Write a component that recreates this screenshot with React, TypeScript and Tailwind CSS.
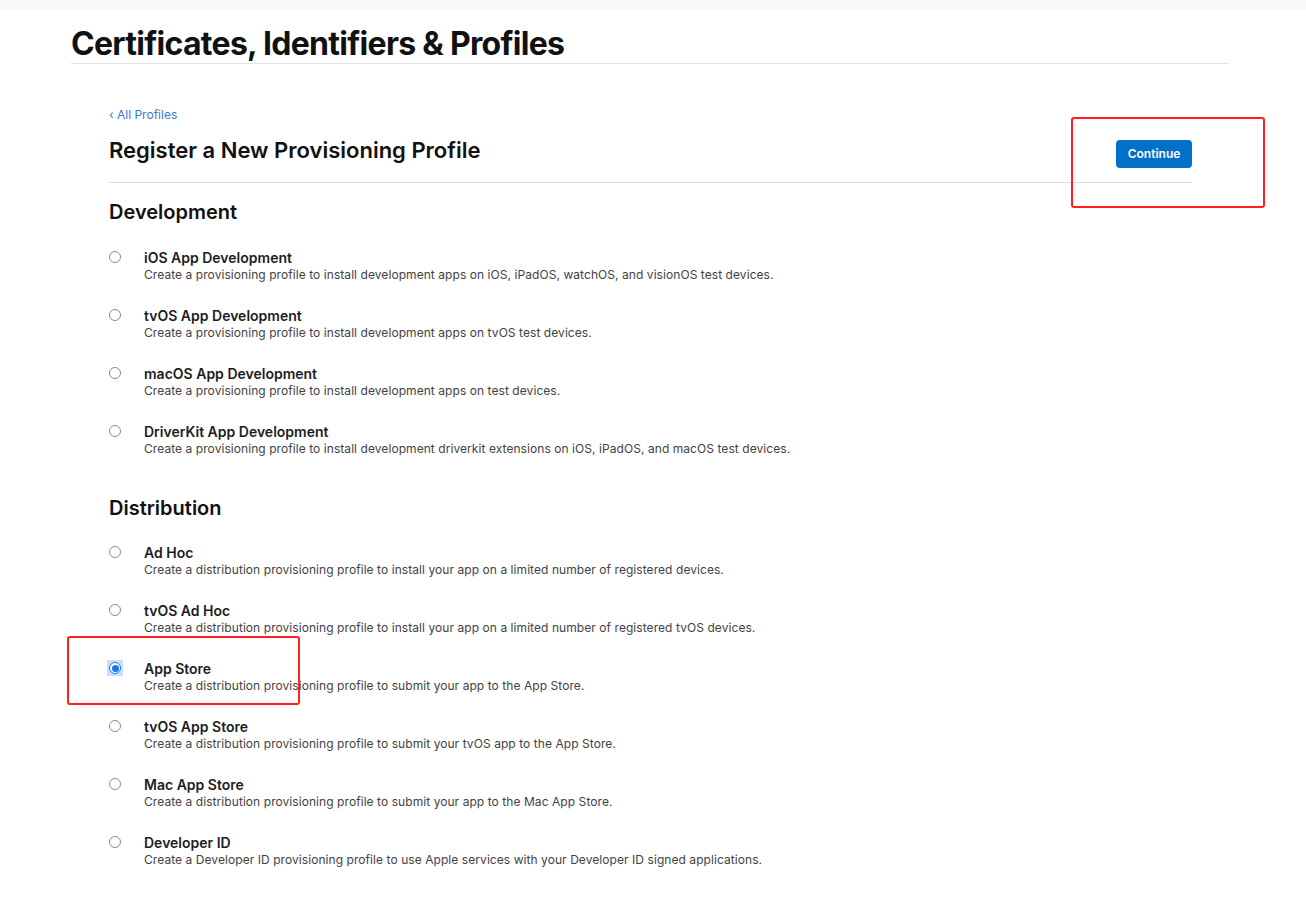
import { useState } from "react";

type Option = { id: string; title: string; desc: string };

const development: Option[] = [
  {
    id: "ios-dev",
    title: "iOS App Development",
    desc: "Create a provisioning profile to install development apps on iOS, iPadOS, watchOS, and visionOS test devices.",
  },
  {
    id: "tvos-dev",
    title: "tvOS App Development",
    desc: "Create a provisioning profile to install development apps on tvOS test devices.",
  },
  {
    id: "macos-dev",
    title: "macOS App Development",
    desc: "Create a provisioning profile to install development apps on test devices.",
  },
  {
    id: "driverkit-dev",
    title: "DriverKit App Development",
    desc: "Create a provisioning profile to install development driverkit extensions on iOS, iPadOS, and macOS test devices.",
  },
];

const distribution: Option[] = [
  {
    id: "adhoc",
    title: "Ad Hoc",
    desc: "Create a distribution provisioning profile to install your app on a limited number of registered devices.",
  },
  {
    id: "tvos-adhoc",
    title: "tvOS Ad Hoc",
    desc: "Create a distribution provisioning profile to install your app on a limited number of registered tvOS devices.",
  },
  {
    id: "appstore",
    title: "App Store",
    desc: "Create a distribution provisioning profile to submit your app to the App Store.",
  },
  {
    id: "tvos-appstore",
    title: "tvOS App Store",
    desc: "Create a distribution provisioning profile to submit your tvOS app to the App Store.",
  },
  {
    id: "mac-appstore",
    title: "Mac App Store",
    desc: "Create a distribution provisioning profile to submit your app to the Mac App Store.",
  },
  {
    id: "developer-id",
    title: "Developer ID",
    desc: "Create a Developer ID provisioning profile to use Apple services with your Developer ID signed applications.",
  },
];

function Radio({ checked }: { checked: boolean }) {
  if (checked) {
    return (
      <span className="flex items-center justify-center w-[16px] h-[16px] -ml-[2px] -mt-[2px] bg-[#c7dffc]">
        <span className="flex items-center justify-center w-[12px] h-[12px] rounded-full border border-[#1a73e8] bg-white">
          <span className="w-[7px] h-[7px] rounded-full bg-[#1a73e8]" />
        </span>
      </span>
    );
  }
  return (
    <span className="block w-[12px] h-[12px] rounded-full border border-[#8a8a8a] bg-white" />
  );
}

function OptionList({
  items,
  selected,
  onSelect,
}: {
  items: Option[];
  selected: string;
  onSelect: (id: string) => void;
}) {
  return (
    <div className="flex flex-col gap-[24px]">
      {items.map((o) => (
        <label
          key={o.id}
          className="flex items-start cursor-pointer"
          onClick={() => onSelect(o.id)}
        >
          <span className="w-[35px] pt-[2px] shrink-0">
            <Radio checked={selected === o.id} />
          </span>
          <span className="flex flex-col">
            <span className="text-[14px] leading-[18px] font-semibold text-[#1d1d1f]">
              {o.title}
            </span>
            <span className="text-[12px] leading-[16px] tracking-[0.065px] text-[#424245]">
              {o.desc}
            </span>
          </span>
        </label>
      ))}
    </div>
  );
}

export default function App() {
  const [selected, setSelected] = useState("appstore");

  return (
    <div className="relative min-h-screen bg-white font-['Inter','Liberation_Sans',sans-serif] text-[#1d1d1f]">
      <div className="h-[10px] bg-[#f9f9f9]" />

      <div className="ml-[71px] w-[1158px]">
        <h1 className="pt-[15px] h-[54px] text-[32px] leading-[38px] font-bold tracking-[-0.022em] text-[#111] border-b border-[#e2e2e2]">
          Certificates, Identifiers &amp; Profiles
        </h1>
      </div>

      <div className="ml-[109px] w-[1083px]">
        <a href="#" className="block mt-[43px] text-[12px] leading-[16px] text-[#3b77d4]">
          ‹ All Profiles
        </a>

        <div className="flex items-start justify-between mt-[13px] pb-[14px] border-b border-[#dcdcdc]">
          <h2 className="text-[22px] leading-[28px] font-semibold text-[#111]">
            Register a New Provisioning Profile
          </h2>
          <button className="mt-[4px] w-[76px] h-[28px] rounded-[4px] bg-[#0070c9] text-white text-[12px] font-semibold">
            Continue
          </button>
        </div>

        <h3 className="mt-[17px] text-[20px] leading-[24px] font-semibold text-[#111]">
          Development
        </h3>
        <div className="mt-[25px]">
          <OptionList items={development} selected={selected} onSelect={setSelected} />
        </div>

        <h3 className="mt-[39px] text-[20px] leading-[24px] font-semibold text-[#111]">
          Distribution
        </h3>
        <div className="mt-[24px] pb-[40px]">
          <OptionList items={distribution} selected={selected} onSelect={setSelected} />
        </div>
      </div>

      <div className="absolute left-[1071px] top-[117px] w-[194px] h-[91px] border-[2px] border-[#ff1f1f] rounded-[3px] pointer-events-none" />
      <div className="absolute left-[67px] top-[636px] w-[233px] h-[69px] border-[2px] border-[#ff1f1f] rounded-[3px] pointer-events-none" />
    </div>
  );
}
